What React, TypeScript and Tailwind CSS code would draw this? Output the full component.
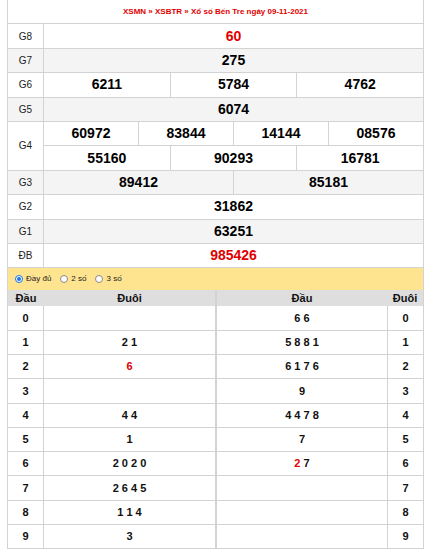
import React from "react";

const prizes: { label: string; cells: string[]; cells2?: string[]; red?: boolean }[] = [
  { label: "G8", cells: ["60"], red: true },
  { label: "G7", cells: ["275"] },
  { label: "G6", cells: ["6211", "5784", "4762"] },
  { label: "G5", cells: ["6074"] },
  { label: "G4", cells: ["60972", "83844", "14144", "08576"], cells2: ["55160", "90293", "16781"] },
  { label: "G3", cells: ["89412", "85181"] },
  { label: "G2", cells: ["31862"] },
  { label: "G1", cells: ["63251"] },
  { label: "ĐB", cells: ["985426"], red: true },
];

// đầu -> đuôi list (left), đuôi -> đầu list (right)
const dau: React.ReactNode[] = [
  "",
  "2 1",
  <span className="text-[#e00000]">6</span>,
  "",
  "4 4",
  "1",
  "2 0 2 0",
  "2 6 4 5",
  "1 1 4",
  "3",
];
const duoi: React.ReactNode[] = [
  "6 6",
  "5 8 8 1",
  "6 1 7 6",
  "9",
  "4 4 7 8",
  "7",
  <>
    <span className="text-[#e00000]">2</span>
    {" 7"}
  </>,
  "",
  "",
  "",
];

function Cells({ values, red }: { values: string[]; red?: boolean }) {
  return (
    <div className="flex flex-1 h-full">
      {values.map((v, i) => (
        <div
          key={i}
          className={
            "flex-1 flex items-center justify-center text-[14px] font-bold " +
            (i > 0 ? "border-l border-[#d3d3d3] " : "") +
            (red ? "text-[#e00000]" : "text-black")
          }
        >
          {v}
        </div>
      ))}
    </div>
  );
}

function Radio({ checked, label }: { checked?: boolean; label: string }) {
  return (
    <span className="flex items-center gap-[3px]">
      <span
        className={
          "w-[8px] h-[8px] rounded-full border flex items-center justify-center bg-white " +
          (checked ? "border-[#1a73e8]" : "border-[#8a8a8a]")
        }
      >
        {checked && <span className="w-[4px] h-[4px] rounded-full bg-[#1a73e8]" />}
      </span>
      <span className="text-[8px] text-[#222]">{label}</span>
    </span>
  );
}

export default function App() {
  return (
    <div className="w-[428px] h-[556px] bg-white font-['Liberation_Sans',Arial,sans-serif]">
      <div className="ml-[7px] w-[417px] border-x border-[#d3d3d3]">
        {/* Title */}
        <div className="h-[24.4px] border-b border-[#d3d3d3] flex items-center justify-center text-[8px] font-bold text-[#e00000]">
          XSMN » XSBTR » Xổ số Bến Tre ngày 09-11-2021
        </div>

        {/* Prize rows */}
        {prizes.map((p, idx) => {
          const bg = idx % 2 === 1 ? "bg-[#f4f4f4]" : "bg-white";
          if (p.cells2) {
            return (
              <div key={p.label} className={"flex h-[48.8px] border-b border-[#d3d3d3] " + bg}>
                <div className="w-[36px] shrink-0 border-r border-[#d3d3d3] flex items-center justify-center text-[10px] text-[#222]">
                  {p.label}
                </div>
                <div className="flex-1 flex flex-col">
                  <div className="h-[24.4px] border-b border-[#d3d3d3]">
                    <Cells values={p.cells} />
                  </div>
                  <div className="flex-1">
                    <Cells values={p.cells2} />
                  </div>
                </div>
              </div>
            );
          }
          return (
            <div key={p.label} className={"flex h-[24.4px] border-b border-[#d3d3d3] " + bg}>
              <div className="w-[36px] shrink-0 border-r border-[#d3d3d3] flex items-center justify-center text-[10px] text-[#222]">
                {p.label}
              </div>
              <Cells values={p.cells} red={p.red} />
            </div>
          );
        })}

        {/* Options */}
        <div className="h-[22px] bg-[#ffe490] flex items-center gap-[9px] pl-[7px]">
          <Radio checked label="Đầy đủ" />
          <Radio label="2 số" />
          <Radio label="3 số" />
        </div>
      </div>

      {/* Loto table */}
      <div className="ml-[7px] w-[417px] flex text-[11px] font-bold text-[#111]">
        <div className="w-[209px] border-x border-[#d3d3d3]">
          <div className="flex h-[16px] bg-[#dedede]">
            <div className="w-[36px] flex items-center justify-center">Đầu</div>
            <div className="flex-1 flex items-center justify-center">Đuôi</div>
          </div>
          {dau.map((v, i) => (
            <div key={i} className="flex h-[24.3px] border-b border-[#d3d3d3]">
              <div className="w-[36px] border-r border-[#d3d3d3] flex items-center justify-center">{i}</div>
              <div className="flex-1 flex items-center justify-center">{v}</div>
            </div>
          ))}
        </div>
        <div className="w-[208px] border-x border-[#d3d3d3]">
          <div className="flex h-[16px] bg-[#dedede]">
            <div className="flex-1 flex items-center justify-center">Đầu</div>
            <div className="w-[36px] flex items-center justify-center">Đuôi</div>
          </div>
          {duoi.map((v, i) => (
            <div key={i} className="flex h-[24.3px] border-b border-[#d3d3d3]">
              <div className="flex-1 border-r border-[#d3d3d3] flex items-center justify-center whitespace-pre">{v}</div>
              <div className="w-[35px] flex items-center justify-center">{i}</div>
            </div>
          ))}
        </div>
      </div>
    </div>
  );
}
